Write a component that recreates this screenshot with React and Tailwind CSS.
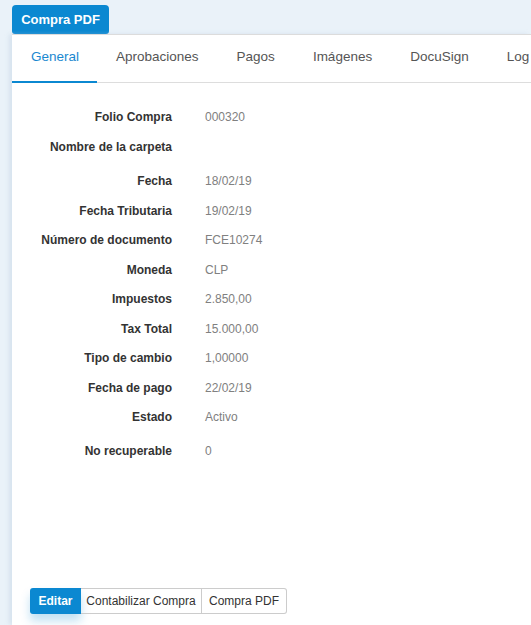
import React from "react";

const rows = [
  { label: "Folio Compra", value: "000320", h: "h-[30px]" },
  { label: "Nombre de la carpeta", value: "", h: "h-[30px]" },
  { label: "Fecha", value: "18/02/19", gap: true },
  { label: "Fecha Tributaria", value: "19/02/19" },
  { label: "Número de documento", value: "FCE10274" },
  { label: "Moneda", value: "CLP" },
  { label: "Impuestos", value: "2.850,00" },
  { label: "Tax Total", value: "15.000,00" },
  { label: "Tipo de cambio", value: "1,00000" },
  { label: "Fecha de pago", value: "22/02/19" },
  { label: "Estado", value: "Activo" },
  { label: "No recuperable", value: "0", gap: true },
];

const tabs = ["General", "Aprobaciones", "Pagos", "Imágenes", "DocuSign", "Log"];

const App = () => {
  return (
    <div
      className="h-[625px] w-[531px] overflow-hidden bg-[#eaf2f9] flex flex-col"
      style={{ fontFamily: '"Liberation Sans", Arial, sans-serif' }}
    >
      <div className="h-[34px] pl-[12px] pt-[5px] flex">
        <button className="h-[29px] w-[97px] rounded-t-[4px] rounded-b-[3px] bg-[#0b88d1] text-white text-[13px] font-bold">
          Compra PDF
        </button>
      </div>

      <div className="ml-[12px] flex-1 bg-white border-t border-[#dcdcdc] flex flex-col shadow-[-3px_0_4px_rgba(180,200,220,0.35)]">
        <div className="flex h-[48px] border-b border-[#dddddd] whitespace-nowrap">
          {tabs.map((t, i) => (
            <div
              key={t}
              className={
                i === 0
                  ? "pl-[19px] pr-[18px] flex items-center text-[13.5px] text-[#1a88d0] border-b-2 border-[#0b88d1] -mb-px pb-[2px]"
                  : "px-[19px] flex items-center text-[13.5px] text-[#555555] pb-[2px]"
              }
            >
              {t}
            </div>
          ))}
        </div>

        <div className="pt-[19px]">
          {rows.map((r) => (
            <div
              key={r.label}
              className={`flex items-center ${r.h || "h-[29.5px]"} ${r.gap ? "mt-[4.5px]" : ""}`}
            >
              <div className="w-[160px] text-right text-[12px] font-bold text-[#333333]">
                {r.label}
              </div>
              <div className="pl-[33px] text-[12px] text-[#808080]">{r.value}</div>
            </div>
          ))}
        </div>

        <div className="mt-auto mb-[11px] ml-[18px] flex">
          <button className="h-[26px] w-[51px] bg-[#0b88d1] text-white text-[12px] font-bold rounded-l-[3px] shadow-[0_7px_10px_rgba(11,136,209,0.25)]">
            Editar
          </button>
          <button className="h-[26px] w-[121px] border border-l-0 border-[#cccccc] text-[12px] text-[#333333]">
            Contabilizar Compra
          </button>
          <button className="h-[26px] w-[85px] border border-l-0 border-[#cccccc] text-[12px] text-[#333333] rounded-r-[3px]">
            Compra PDF
          </button>
        </div>
      </div>
    </div>
  );
};

export default App;
